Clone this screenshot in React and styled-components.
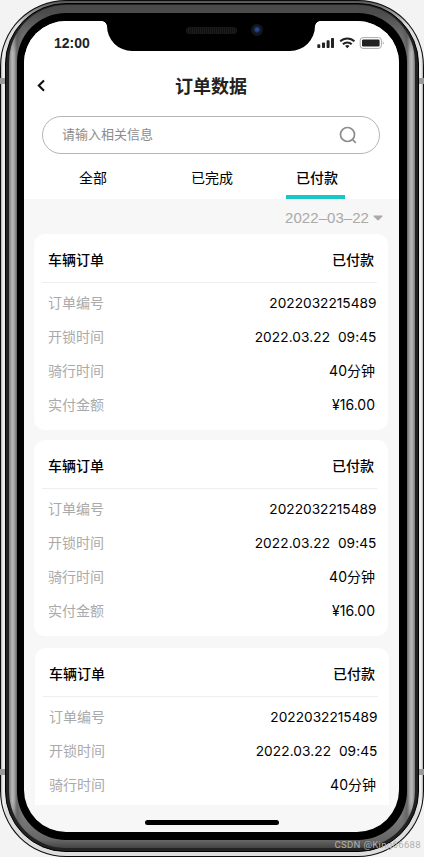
import React from "react";
import styled, { createGlobalStyle } from "styled-components";

const order = {
  no: "2022032215489",
  time: "2022.03.22  09:45",
  duration: "40分钟",
  amount: "¥16.00",
};

const StatusBar = () => (
  <StatusRow>
    <Clock>12:00</Clock>
    <Notch>
      <Speaker />
      <Camera />
    </Notch>
    <svg width="68" height="12" viewBox="0 0 68 12">
      <g fill="#222">
        <rect x="0.3" y="7.3" width="3" height="3.7" rx="0.8" />
        <rect x="5" y="5.4" width="3" height="5.6" rx="0.8" />
        <rect x="9.6" y="3.2" width="3" height="7.8" rx="0.8" />
        <rect x="14" y="1" width="3" height="10" rx="0.8" />
        <rect x="45" y="2.4" width="17.6" height="7.2" rx="1.4" />
      </g>
      <g fill="none" stroke="#222" strokeWidth="2">
        <path d="M23.2 4.4a10.2 10.2 0 0 1 14.2 0" />
        <path d="M25.9 7.2a6.3 6.3 0 0 1 8.8 0" />
      </g>
      <path d="M30.3 11.3l-2.2-2.2a3.2 3.2 0 0 1 4.4 0z" fill="#222" />
      <rect x="43.2" y="0.6" width="21.2" height="10.8" rx="2.8" fill="none" stroke="#a5aaaa" />
      <path d="M65.8 4.2c1.3.6 1.3 3 0 3.6z" fill="#a5aaaa" />
    </svg>
  </StatusRow>
);

const OrderCard = ({ order, last }) => (
  <Card $last={last}>
    <CardHead>
      <span>车辆订单</span>
      <span>已付款</span>
    </CardHead>
    <Row>
      <Label>订单编号</Label>
      <Value>{order.no}</Value>
    </Row>
    <Row>
      <Label>开锁时间</Label>
      <Value $spaced>{order.time}</Value>
    </Row>
    <Row>
      <Label>骑行时间</Label>
      <Value $short>{order.duration}</Value>
    </Row>
    {!last && (
      <Row>
        <Label>实付金额</Label>
        <Value $short>{order.amount}</Value>
      </Row>
    )}
  </Card>
);

const App = () => {
  return (
    <Phone>
      <GlobalStyle />
      <Rim>
        <Band>
          <Steel>
            <Bezel>
              <Screen>
                <Header>
                  <StatusBar />
                  <TitleBar>
                    <svg width="10" height="14" viewBox="0 0 10 14">
                      <path d="M8 1.4L2.8 6.6 8 11.8" fill="none" stroke="#111" strokeWidth="2.1" />
                    </svg>
                    <Title>订单数据</Title>
                  </TitleBar>
                  <Search>
                    <span>请输入相关信息</span>
                    <svg width="18" height="18" viewBox="0 0 18 18" fill="none" stroke="#8c8c8c" strokeWidth="1.7">
                      <circle cx="8.5" cy="8.5" r="7" />
                      <path d="M13 13l3.8 3.8" />
                    </svg>
                  </Search>
                  <Tabs>
                    <Tab>全部</Tab>
                    <Tab>已完成</Tab>
                    <Tab $active>
                      <span>已付款</span>
                    </Tab>
                  </Tabs>
                </Header>
                <DateFilter>
                  2022–03–22
                  <svg width="10" height="6" viewBox="0 0 10 6">
                    <path d="M1 .5h8c.6 0 .8.6.4 1L5.8 5.1c-.5.5-1.1.5-1.6 0L.6 1.5C.2 1.1.4.5 1 .5z" fill="#aaa" />
                  </svg>
                </DateFilter>
                <List>
                  <OrderCard order={order} />
                  <OrderCard order={order} />
                  <OrderCard order={order} last />
                </List>
                <HomeBar />
              </Screen>
            </Bezel>
          </Steel>
        </Band>
      </Rim>
      <SideKey $side="left" $top={78} />
      <SideKey $side="right" $top={78} />
      <SideKey $side="left" $top={769} />
      <SideKey $side="right" $top={769} />
      <Watermark>CSDN @King66688</Watermark>
    </Phone>
  );
};

const GlobalStyle = createGlobalStyle`
  * {
    box-sizing: border-box;
  }
  body {
    margin: 0;
    background: #f3f3f3;
    font-family: "Liberation Sans", "Noto Sans CJK SC", sans-serif;
    overflow: hidden;
  }
  svg {
    display: block;
    flex: none;
  }
`;

// phone body, from the outer edge to the glass
const Phone = styled.div`
  position: relative;
  width: 424px;
  height: 857px;
  padding: 1px;
  border-radius: 66px;
  background: #0c0c0c;
`;

const Rim = styled.div`
  height: 100%;
  padding: 2px 4px 4px;
  border-radius: 65px;
  background: linear-gradient(180deg, #555, #666 3px, rgba(120, 120, 120, 0) 24px),
    linear-gradient(90deg, #aaa, #f2f2f2 2px, #ddd 5px, #ddd calc(100% - 5px), #f2f2f2 calc(100% - 2px), #aaa);
`;

const Band = styled.div`
  height: 100%;
  padding: 1px 3px 3px 3px;
  border-radius: 61px;
  background: #222;
  border: 1px solid #000;
`;

const Steel = styled.div`
  height: 100%;
  padding: 8px 8px 8px;
  border-radius: 57px;
  background: linear-gradient(
      180deg,
      #484848,
      #4c4c4c 8px,
      rgba(70, 70, 70, 0) 48px,
      rgba(70, 70, 70, 0) calc(100% - 48px),
      #666 calc(100% - 8px),
      #444
    ),
    linear-gradient(
      90deg,
      #777,
      #b8b8b8 3px,
      #aaa 5px,
      #666 8px,
      #888 14px,
      #888 calc(100% - 14px),
      #666 calc(100% - 8px),
      #aaa calc(100% - 5px),
      #b8b8b8 calc(100% - 3px),
      #777
    );
`;

const Bezel = styled.div`
  height: 100%;
  padding: 8px 8px 8px 7px;
  border-radius: 49px;
  background: #000;
`;

const Screen = styled.div`
  display: flex;
  flex-direction: column;
  height: 100%;
  border-radius: 42px;
  overflow: hidden;
  background: #f7f7f7;
`;

const Header = styled.header`
  flex: none;
  height: 178px;
  background: #fff;
`;

const StatusRow = styled.div`
  display: flex;
  justify-content: space-between;
  align-items: center;
  height: 44px;
  padding: 0 14px 0 30px;
`;

const Clock = styled.span`
  width: 53px;
  font-size: 14px;
  font-weight: 600;
  color: #222;
`;

const Notch = styled.div`
  display: flex;
  align-self: flex-start;
  align-items: center;
  position: relative;
  width: 209px;
  height: 30px;
  margin-right: 2px;
  padding: 0 0 12px 79px;
  border-radius: 0 0 25px 25px;
  background: #000;
  &::before,
  &::after {
    content: "";
    position: absolute;
    top: 0;
    width: 5px;
    height: 5px;
  }
  &::before {
    right: 100%;
    background: radial-gradient(circle at 0 100%, transparent 4.5px, #000 5px);
  }
  &::after {
    left: 100%;
    background: radial-gradient(circle at 100% 100%, transparent 4.5px, #000 5px);
  }
`;

const Speaker = styled.div`
  width: 51px;
  height: 7px;
  border-radius: 4px;
  background: repeating-linear-gradient(90deg, #1c1c1c 0 1px, #111 1px 2px);
`;

const Camera = styled.div`
  width: 12px;
  height: 12px;
  margin-left: 14px;
  border: 2px solid #15151a;
  border-radius: 50%;
  background: radial-gradient(circle at 50% 45%, #27488c 20%, #10203e 55%, #08080c 80%);
`;

const TitleBar = styled.div`
  display: flex;
  align-items: center;
  height: 42px;
  padding-left: 12px;
`;

const Title = styled.h1`
  flex: 1;
  margin: 0 23px 0 0;
  padding-top: 1px;
  font-size: 18px;
  font-weight: 700;
  line-height: 26px;
  text-align: center;
  color: #222;
`;

const Search = styled.div`
  display: flex;
  justify-content: space-between;
  align-items: center;
  height: 38px;
  margin: 9px 19px 0 18px;
  padding: 0 22px 0 19px;
  border: 1px solid #b5b5b5;
  border-radius: 19px;
  font-size: 13px;
  color: #8c8c8c;
  span {
    padding-bottom: 4px;
  }
`;

const Tabs = styled.div`
  display: grid;
  grid-template-columns: 138px 100px 107px;
  height: 45px;
`;

const Tab = styled.div`
  display: flex;
  flex-direction: column;
  justify-content: space-between;
  align-items: center;
  padding-top: 14px;
  font-size: 14px;
  font-weight: ${({ $active }) => ($active ? 500 : 400)};
  line-height: 20px;
  color: #000;
  span {
    padding-left: 3px;
  }
  &::after {
    content: "";
    width: 59px;
    height: 4px;
    background: ${({ $active }) => ($active ? "#18c8c6" : "transparent")};
  }
`;

const DateFilter = styled.div`
  display: flex;
  justify-content: flex-end;
  align-items: center;
  gap: 4px;
  flex: none;
  height: 35px;
  padding: 2px 16px 0 0;
  font-size: 15px;
  letter-spacing: 0.05px;
  color: #aaa;
`;

const List = styled.div`
  flex: none;
  height: 571px;
  padding: 0 11px 0 10px;
  overflow: hidden;
`;

const Card = styled.div`
  height: 196px;
  margin: ${({ $last }) => ($last ? "12px -1px 0 1px" : "0 0 10px")};
  padding: 0 11px 0 8px;
  border-radius: 11px;
  background: #fff;
`;

const CardHead = styled.div`
  display: flex;
  justify-content: space-between;
  align-items: center;
  height: 49px;
  margin-bottom: 3px;
  padding: 4px 3px 0 6px;
  border-bottom: 1px solid #eee;
  font-size: 14px;
  font-weight: 500;
  line-height: 20px;
`;

const Row = styled.div`
  display: flex;
  justify-content: space-between;
  align-items: center;
  height: 34px;
  padding-left: 6px;
  line-height: 20px;
`;

const Label = styled.span`
  font-size: 14px;
  color: #aaa;
`;

const Value = styled.span`
  padding-right: ${({ $short }) => ($short ? 2 : 0.5)}px;
  font-family: Inter, "Noto Sans CJK SC", sans-serif;
  font-size: ${({ $short }) => ($short ? 14 : 13.7)}px;
  letter-spacing: ${({ $spaced }) => ($spaced ? 0.07 : 0)}px;
  white-space: pre;
`;

const HomeBar = styled.div`
  flex: none;
  width: 134px;
  height: 5px;
  margin: 15px auto 0;
  border-radius: 3px;
  background: #000;
`;

const SideKey = styled.div`
  position: absolute;
  top: ${({ $top }) => $top}px;
  ${({ $side }) => $side}: 0;
  width: 5px;
  height: 6px;
  background: #999;
`;

const Watermark = styled.div`
  position: absolute;
  right: 3px;
  bottom: 7px;
  font-family: Roboto, sans-serif;
  font-size: 9.6px;
  letter-spacing: 0.3px;
  color: #b0b0b0;
`;

export default App;
